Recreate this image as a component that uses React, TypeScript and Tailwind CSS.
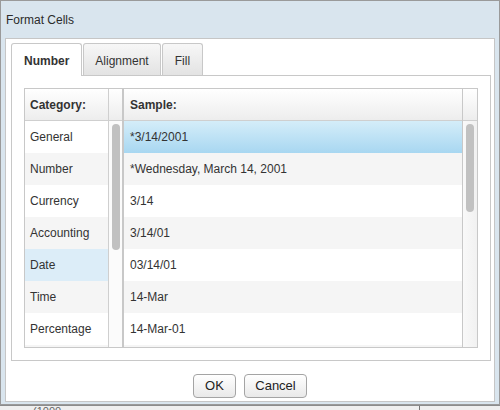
import React from "react";

const categories = ["General", "Number", "Currency", "Accounting", "Date", "Time", "Percentage", ""];
const samples = ["*3/14/2001", "*Wednesday, March 14, 2001", "3/14", "3/14/01", "03/14/01", "14-Mar", "14-Mar-01", ""];

function HeaderCell({ children }: { children?: React.ReactNode }) {
  return (
    <div className="h-[32px] shrink-0 border-b border-[#cfcfcf] bg-linear-to-b from-white to-[#ededed] flex items-center text-[12px] font-bold text-[#333]">
      {children}
    </div>
  );
}

export default function App() {
  return (
    <div
      className="w-[500px] h-[410px] overflow-hidden bg-[#efefef] flex flex-col"
      style={{ fontFamily: '"Liberation Sans", Arial, sans-serif' }}
    >
      {/* Dialog window */}
      <div className="h-[405px] shrink-0 border border-[#9a9a9a] bg-[#d9e5ee] px-[4px] pb-[2px] flex flex-col">
        <div className="h-[37px] shrink-0 flex items-center pl-[1px] text-[12px] text-[#2b2b2b]">Format Cells</div>

        <div className="h-[364px] shrink-0 border border-[#c6c6c6] bg-white pt-[4px] pl-[5px] flex flex-col">
          {/* Tabs */}
          <div className="flex items-start gap-[1px]">
            <div className="relative z-10 -mb-[1px] h-[33px] px-[12px] pt-[2px] flex items-center border border-b-0 border-[#c8c8c8] rounded-t-[3px] bg-white text-[12px] font-bold text-[#333]">
              Number
            </div>
            <div className="h-[32px] px-[11px] pt-[2px] flex items-center border border-b-0 border-[#c8c8c8] rounded-t-[3px] bg-linear-to-b from-[#f7f7f7] to-[#e3e3e3] text-[12px] text-[#333]">
              Alignment
            </div>
            <div className="h-[32px] px-[12px] pt-[2px] flex items-center border border-b-0 border-[#c8c8c8] rounded-t-[3px] bg-linear-to-b from-[#f7f7f7] to-[#e3e3e3] text-[12px] text-[#333]">
              Fill
            </div>
          </div>

          {/* Tab panel */}
          <div className="w-[480px] h-[286px] shrink-0 border border-[#c8c8c8] p-[12px]">
            <div className="h-[260px] border border-[#c8c8c8] flex overflow-hidden">
              {/* Category */}
              <div className="w-[84px] border-r border-[#cfcfcf] flex flex-col">
                <HeaderCell>
                  <span className="pl-[5px]">Category:</span>
                </HeaderCell>
                {categories.map((c, i) => (
                  <div
                    key={i}
                    className={
                      "h-[32px] shrink-0 flex items-center pl-[5px] text-[12px] text-[#333] " +
                      (i === 4 ? "bg-[#dcedf8]" : i % 2 === 1 ? "bg-[#f5f5f5]" : "bg-white")
                    }
                  >
                    {c}
                  </div>
                ))}
              </div>

              {/* Category scrollbar */}
              <div className="w-[13px] flex flex-col">
                <HeaderCell />
                <div className="flex-1 bg-[#fbfbfb] pt-[3px] pl-[3px]">
                  <div className="w-[8px] h-[126px] rounded-full bg-[#c1c1c1]" />
                </div>
              </div>

              {/* Sample */}
              <div className="w-[341px] border-l-2 border-r border-[#c8c8c8] flex flex-col">
                <HeaderCell>
                  <span className="pl-[6px]">Sample:</span>
                </HeaderCell>
                {samples.map((s, i) => (
                  <div
                    key={i}
                    className={
                      "h-[32px] shrink-0 flex items-center pl-[6px] text-[12px] text-[#333] " +
                      (i === 0
                        ? "bg-linear-to-b from-[#d4edf9] to-[#a8d7f1]"
                        : i % 2 === 1
                        ? "bg-[#f5f5f5]"
                        : "bg-white")
                    }
                  >
                    {s}
                  </div>
                ))}
              </div>

              {/* Sample scrollbar */}
              <div className="w-[14px] flex flex-col">
                <HeaderCell />
                <div className="flex-1 bg-linear-to-r from-[#f9f9f9] to-[#f1f1f1] pt-[3px] pl-[3px]">
                  <div className="w-[8px] h-[88px] rounded-full bg-[#c1c1c1]" />
                </div>
              </div>
            </div>
          </div>

          {/* Buttons */}
          <div className="mt-[13px] pr-[5px] flex justify-center gap-[8px]">
            <button className="w-[43px] h-[24px] rounded-[4px] border border-[#a4a4a4] bg-linear-to-b from-white to-[#e9e9e9] text-[13px] text-[#222]">
              OK
            </button>
            <button className="w-[63px] h-[24px] rounded-[4px] border border-[#a4a4a4] bg-linear-to-b from-white to-[#e9e9e9] text-[13px] text-[#222]">
              Cancel
            </button>
          </div>
        </div>
      </div>

      {/* Page behind the dialog */}
      <div className="flex-1 flex border-t border-[#8c8c8c]">
        <div className="w-[420px] border-r border-[#777] pl-[33px] overflow-hidden">
          <div className="text-[11px] leading-[9px] text-[#666] pt-[1px]">(1000</div>
        </div>
      </div>
    </div>
  );
}
